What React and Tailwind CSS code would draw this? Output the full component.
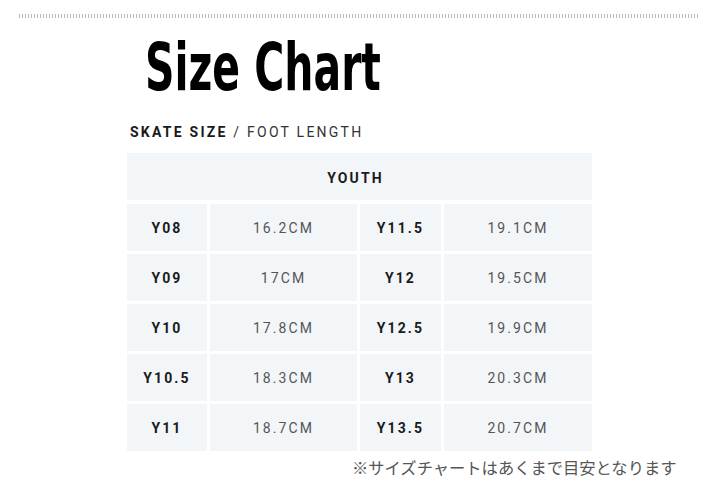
import React from "react";

const rows = [
  ["Y08", "16.2CM", "Y11.5", "19.1CM"],
  ["Y09", "17CM", "Y12", "19.5CM"],
  ["Y10", "17.8CM", "Y12.5", "19.9CM"],
  ["Y10.5", "18.3CM", "Y13", "20.3CM"],
  ["Y11", "18.7CM", "Y13.5", "20.7CM"],
];

export default function App() {
  return (
    <div className="w-[720px] h-[497px] bg-white overflow-hidden font-['Roboto',sans-serif]">
      <div className="pt-[14px] px-[19px]">
        <div className="h-[4px] w-[680px] bg-[repeating-linear-gradient(90deg,#b8b8b8_0_1px,transparent_1px_3px)]" />
      </div>
      <div className="ml-[127px] w-[465px]">
        <h1 className="pl-[18px] mt-[18px] h-[64px] leading-[64px] text-[65px] font-bold text-black font-['DejaVu_Sans_Condensed',sans-serif]">
          <span className="inline-block origin-left scale-x-[0.70]">Size Chart</span>
        </h1>
        <div className="pl-[3px] mt-[22px] text-[14px] leading-[20px] tracking-[0.16em] text-[#333]">
          <span className="font-bold text-[#1a1a1a]">SKATE SIZE</span> / FOOT LENGTH
        </div>
        <div className="mt-[11px] grid grid-cols-[80px_147px_81px_148px] gap-[3px] text-[14px] tracking-[0.15em]">
          <div className="col-span-4 h-[47px] mb-[1px] pt-[4px] pr-[8px] bg-[#f3f6f9] flex items-center justify-center font-bold text-[#1a1a1a]">
            YOUTH
          </div>
          {rows.map((r) => (
            <React.Fragment key={r[0]}>
              <div className="h-[47px] pt-[2px] bg-[#f3f6f9] flex items-center justify-center font-bold text-[#1a1a1a]">{r[0]}</div>
              <div className="h-[47px] pt-[2px] bg-[#f3f6f9] flex items-center justify-center text-[#555]">{r[1]}</div>
              <div className="h-[47px] pt-[2px] bg-[#f3f6f9] flex items-center justify-center font-bold text-[#1a1a1a]">{r[2]}</div>
              <div className="h-[47px] pt-[2px] bg-[#f3f6f9] flex items-center justify-center text-[#555]">{r[3]}</div>
            </React.Fragment>
          ))}
        </div>
      </div>
      <div className="ml-[352px] mt-[5px] text-[16.3px] leading-[22px] text-[#555] font-['Noto_Sans_CJK_JP',sans-serif]">
        ※サイズチャートはあくまで目安となります
      </div>
    </div>
  );
}
